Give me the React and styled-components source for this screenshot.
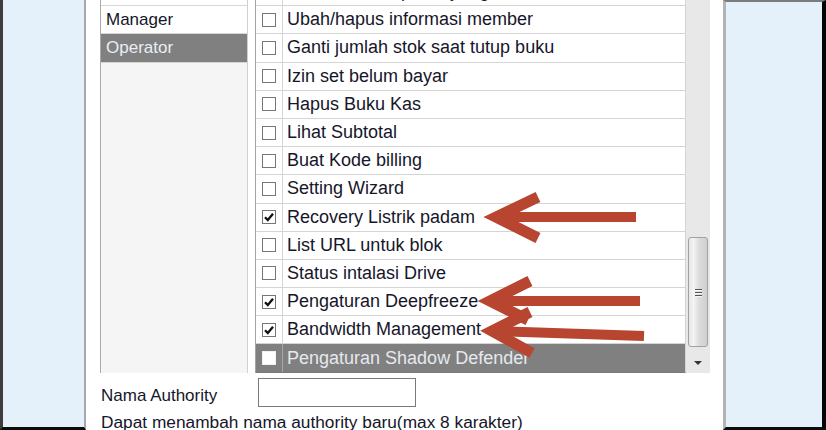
import React from "react";
import styled, { createGlobalStyle } from "styled-components";

const GlobalStyle = createGlobalStyle`
  html, body {
    margin: 0;
    padding: 0;
    overflow: hidden;
    background: #ffffff;
  }
  body {
    font-family: "Liberation Sans", Arial, sans-serif;
    color: #16162a;
  }
`;

const ROW_H = 28.2;

const roles = [
  { name: "Admin" },
  { name: "Manager" },
  { name: "Operator", selected: true },
];

const permissions = [
  { label: "Tambah/ubah paket yang ada", checked: false },
  { label: "Ubah/hapus informasi member", checked: false },
  { label: "Ganti jumlah stok saat tutup buku", checked: false },
  { label: "Izin set belum bayar", checked: false },
  { label: "Hapus Buku Kas", checked: false },
  { label: "Lihat Subtotal", checked: false },
  { label: "Buat Kode billing", checked: false },
  { label: "Setting Wizard", checked: false },
  { label: "Recovery Listrik padam", checked: true },
  { label: "List URL untuk blok", checked: false },
  { label: "Status intalasi Drive", checked: false },
  { label: "Pengaturan Deepfreeze", checked: true },
  { label: "Bandwidth Management", checked: true },
  { label: "Pengaturan Shadow Defender", checked: false, selected: true },
];

const Page = styled.div`
  position: relative;
  width: 826px;
  height: 430px;
  display: flex;
  overflow: hidden;
`;

const Backdrop = styled.div`
  flex: none;
  box-sizing: border-box;
  height: 430px;
  width: ${(p) => p.$width}px;
  background: #e4f1fb;
  border-bottom: 3px solid #0c0c0c;
  border-left: ${(p) => (p.$side === "left" ? "3px solid #3d3d3d" : "3px solid #b3b3b3")};
  border-right: ${(p) => (p.$side === "left" ? "2px solid #a8a8a8" : "4px solid #050505")};
  border-top: ${(p) => (p.$side === "left" ? "none" : "2px solid #7c7c7c")};
`;

const Dialog = styled.div`
  flex: 1;
  display: flex;
  flex-direction: column;
  padding: 0 13px 0 14px;
  background: #ffffff;
  font-size: 17px;
`;

const Main = styled.div`
  display: flex;
  gap: 7px;
  height: 395px;
  margin-top: -22px;
`;

const RoleList = styled.div`
  flex: none;
  width: 148px;
  box-sizing: border-box;
  height: 395px;
  background: #f5f5f5;
  border-left: 1px solid #a9a9a9;
  border-right: 1px solid #d0d0d0;
  display: flex;
  flex-direction: column;
`;

const RoleItem = styled.div`
  box-sizing: border-box;
  height: ${ROW_H}px;
  display: flex;
  align-items: center;
  padding-left: 5px;
  background: ${(p) => (p.$selected ? "#808080" : "#ffffff")};
  color: ${(p) => (p.$selected ? "#e9eef4" : "#16162a")};
  border-bottom: 1px solid #d6d6d6;
`;

const Grid = styled.div`
  flex: 1;
  display: flex;
  height: 395px;
  overflow: hidden;
`;

const Table = styled.div`
  flex: 1;
  border-left: 1px solid #a3a3a3;
  display: flex;
  flex-direction: column;
  font-size: 18px;
`;

const Row = styled.div`
  flex: none;
  box-sizing: border-box;
  height: ${ROW_H}px;
  display: grid;
  grid-template-columns: 27px 1fr;
  background: ${(p) => (p.$selected ? "#808080" : "#ffffff")};
  color: ${(p) => (p.$selected ? "#e6e9ee" : "#16162a")};
  border-bottom: 1px solid ${(p) => (p.$selected ? "#7a7a7a" : "#d4d4d4")};
  border-right: 1px solid #d4d4d4;
`;

const CheckCell = styled.div`
  display: flex;
  align-items: center;
  justify-content: center;
  border-right: 1px solid ${(p) => (p.$selected ? "#a6a6a6" : "#d4d4d4")};
`;

const Box = styled.div`
  box-sizing: border-box;
  width: 14px;
  height: 14px;
  background: #ffffff;
  border: 1px solid ${(p) => (p.$selected ? "#f2f2f2" : "#767676")};
  display: flex;
  align-items: center;
  justify-content: center;
`;

const Label = styled.div`
  display: flex;
  align-items: center;
  padding-left: 4px;
  white-space: nowrap;
  overflow: hidden;
`;

const Scrollbar = styled.div`
  flex: none;
  width: 24px;
  background: #e8e8e8;
  display: flex;
  flex-direction: column;
  align-items: center;
  padding-top: 259px;
  box-sizing: border-box;
`;

const Thumb = styled.div`
  box-sizing: border-box;
  width: 20px;
  height: 110px;
  border: 1px solid #a2a2a2;
  border-radius: 3px;
  background: linear-gradient(to right, #e6e6e6, #f4f4f4 25%, #dcdcdc 55%, #cfcfcf);
  display: flex;
  flex-direction: column;
  align-items: center;
  justify-content: center;
  gap: 2px;
`;

const Grip = styled.span`
  display: block;
  width: 7px;
  height: 1px;
  background: #555;
  box-shadow: 0 1px 0 #f8f8f8;
`;

const DownButton = styled.div`
  margin-top: auto;
  height: 24px;
  width: 24px;
  display: flex;
  align-items: center;
  justify-content: center;
  padding-top: 3px;
  box-sizing: border-box;
`;

const NameRow = styled.div`
  display: flex;
  align-items: flex-start;
  margin-top: 5px;
`;

const FieldLabel = styled.div`
  width: 157px;
  padding-left: 1px;
  margin-top: 8px;
  line-height: 20px;
`;

const Input = styled.div`
  box-sizing: border-box;
  width: 158px;
  height: 29px;
  border: 1px solid #7a7a7a;
  background: #fff;
`;

const Hint = styled.div`
  margin-top: 5px;
  padding-left: 1px;
  line-height: 20px;
  font-size: 17.3px;
  white-space: nowrap;
`;

const Overlay = styled.svg`
  position: absolute;
  left: 0;
  top: 0;
  width: 826px;
  height: 430px;
  pointer-events: none;
`;

function CheckBox({ checked, selected }) {
  return (
    <Box $selected={selected}>
      {checked && (
        <svg width="12" height="12" viewBox="0 0 12 12">
          <path d="M2 6.2 L4.8 9 L10 2.8" fill="none" stroke="#111" strokeWidth="2.3" />
        </svg>
      )}
    </Box>
  );
}

function Arrow({ tip, end, up, down }) {
  const vx = tip[0] + 13;
  const vy = tip[1];
  return (
    <g stroke="#b8452f" fill="none">
      <line x1={vx} y1={vy} x2={end[0]} y2={end[1]} strokeWidth="10" />
      <polyline
        points={`${up[0]},${up[1]} ${vx},${vy} ${down[0]},${down[1]}`}
        strokeWidth="11"
        strokeLinejoin="miter"
        strokeMiterlimit="6"
      />
    </g>
  );
}

export default function App() {
  return (
    <>
      <GlobalStyle />
      <Page>
        <Backdrop $side="left" $width={86} />
        <Dialog>
          <Main>
            <RoleList>
              {roles.map((r) => (
                <RoleItem key={r.name} $selected={r.selected}>
                  {r.name}
                </RoleItem>
              ))}
            </RoleList>
            <Grid>
              <Table>
                {permissions.map((p) => (
                  <Row key={p.label} $selected={p.selected}>
                    <CheckCell $selected={p.selected}>
                      <CheckBox checked={p.checked} selected={p.selected} />
                    </CheckCell>
                    <Label>{p.label}</Label>
                  </Row>
                ))}
              </Table>
              <Scrollbar>
                <Thumb>
                  <Grip />
                  <Grip />
                  <Grip />
                </Thumb>
                <DownButton>
                  <svg width="10" height="6" viewBox="0 0 10 6">
                    <path d="M1 1 H9 L5 5 Z" fill="#333" />
                  </svg>
                </DownButton>
              </Scrollbar>
            </Grid>
          </Main>
          <NameRow>
            <FieldLabel>Nama Authority</FieldLabel>
            <Input />
          </NameRow>
          <Hint>Dapat menambah nama authority baru(max 8 karakter)</Hint>
        </Dialog>
        <Backdrop $side="right" $width={103} />
        <Overlay viewBox="0 0 826 430">
          <Arrow tip={[483, 217]} end={[636, 217]} up={[538, 197]} down={[538, 238]} />
          <Arrow tip={[477, 301]} end={[640, 301]} up={[530, 281]} down={[528, 320]} />
          <Arrow tip={[479, 331]} end={[644, 336]} up={[530, 312]} down={[532, 353]} />
        </Overlay>
      </Page>
    </>
  );
}
